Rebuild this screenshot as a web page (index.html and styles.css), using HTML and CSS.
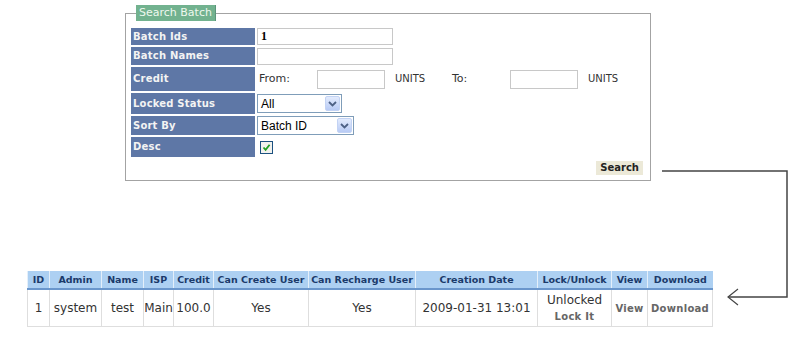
FILE: index.html
```html
<!DOCTYPE html>
<html lang="en">

<head>
  <meta charset="UTF-8">
  <title>Batch Search</title>
  <link rel="stylesheet" href="styles.css">
</head>

<body>
  <div class="page">

    <!-- Search form -->
    <fieldset class="search">
      <legend>Search Batch</legend>
      <table class="form">
        <tr class="row-ids">
          <th>Batch Ids</th>
          <td><input type="text" class="txt txt-id" value="1"></td>
        </tr>
        <tr class="row-names">
          <th>Batch Names</th>
          <td><input type="text" class="txt"></td>
        </tr>
        <tr class="row-credit">
          <th>Credit</th>
          <td>
            <div class="range">
              <span class="range-label">From:</span>
              <input type="text" class="txt txt-small">
              <span class="units">UNITS</span>
              <span class="range-label">To:</span>
              <input type="text" class="txt txt-small">
              <span class="units">UNITS</span>
            </div>
          </td>
        </tr>
        <tr class="row-status">
          <th>Locked Status</th>
          <td>
            <div class="select select-status">
              <span>All</span>
              <span class="select-btn">
                <svg width="9" height="6" viewBox="0 0 9 6"><path d="M1 1 L4.5 4.5 L8 1" fill="none" stroke="#4d6185" stroke-width="1.8"/></svg>
              </span>
            </div>
          </td>
        </tr>
        <tr class="row-sort">
          <th>Sort By</th>
          <td>
            <div class="select select-sort">
              <span>Batch ID</span>
              <span class="select-btn">
                <svg width="9" height="6" viewBox="0 0 9 6"><path d="M1 1 L4.5 4.5 L8 1" fill="none" stroke="#4d6185" stroke-width="1.8"/></svg>
              </span>
            </div>
          </td>
        </tr>
        <tr class="row-desc">
          <th>Desc</th>
          <td>
            <span class="check">
              <svg width="9" height="9" viewBox="0 0 9 9"><path d="M1.5 4.5 L3.6 6.8 L7.6 1.8" fill="none" stroke="#21a121" stroke-width="1.8"/></svg>
            </span>
          </td>
        </tr>
      </table>
      <div class="actions">
        <button class="btn">Search</button>
      </div>
    </fieldset>

    <!-- Results -->
    <table class="results">
      <colgroup>
        <col style="width: 22px">
        <col style="width: 52px">
        <col style="width: 42px">
        <col style="width: 30px">
        <col style="width: 40px">
        <col style="width: 95px">
        <col style="width: 107px">
        <col style="width: 122px">
        <col style="width: 74px">
        <col style="width: 36px">
        <col style="width: 65px">
      </colgroup>
      <thead>
        <tr>
          <th>ID</th>
          <th>Admin</th>
          <th>Name</th>
          <th>ISP</th>
          <th>Credit</th>
          <th>Can Create User</th>
          <th>Can Recharge User</th>
          <th>Creation Date</th>
          <th>Lock/Unlock</th>
          <th>View</th>
          <th>Download</th>
        </tr>
      </thead>
      <tbody>
        <tr>
          <td>1</td>
          <td>system</td>
          <td>test</td>
          <td>Main</td>
          <td>100.0</td>
          <td>Yes</td>
          <td>Yes</td>
          <td>2009-01-31 13:01</td>
          <td>Unlocked<br><a class="link">Lock It</a></td>
          <td><a class="link">View</a></td>
          <td><a class="link">Download</a></td>
        </tr>
      </tbody>
    </table>

    <!-- connector from the search button to the results -->
    <svg class="connector" width="800" height="340" viewBox="0 0 800 340">
      <path d="M662 171 H787 V297 H728" fill="none" stroke="#444" stroke-width="1.5"/>
      <path d="M738 289 L728 297 L738 305" fill="none" stroke="#444" stroke-width="1.2"/>
    </svg>
  </div>
</body>

</html>
```

FILE: styles.css
```css
body {
  margin: 0;
  background: #fff;
  font-family: 'DejaVu Sans', Verdana, sans-serif;
  color: #333;
}

.page {
  position: relative;
  width: 800px;
  height: 340px;
  overflow: hidden;
}

/* search box */

.search {
  box-sizing: border-box;
  width: 526px;
  margin: 5px 0 0 125px;
  padding: 5px 3px 5px 3px;
  border: 1px solid #a3a3a3;
}

.search legend {
  margin-left: 7px;
  padding: 0 3px;
  height: 16px;
  line-height: 16px;
  font-size: 11px;
  background: #72b28f;
  color: #eef8ee;
  border-right: 1px solid #5b957a;
}

.form {
  width: 100%;
  border-spacing: 2px;
  border-collapse: separate;
}

.form th {
  width: 124px;
  padding: 0 0 0 2px;
  box-sizing: border-box;
  text-align: left;
  font-size: 10px;
  line-height: 12px;
  font-weight: bold;
  letter-spacing: 0.2px;
  color: #f3f3f3;
  background: #5e77a6;
}

.form td {
  padding: 0;
  line-height: 12px;
  vertical-align: middle;
}

.row-ids th,
.row-ids td {
  height: 17px;
}

.row-names th,
.row-names td {
  height: 18px;
}

.row-credit th,
.row-credit td {
  height: 24px;
}

.row-status th,
.row-status td {
  height: 21px;
}

.row-sort th,
.row-sort td {
  height: 19px;
}

.row-desc th,
.row-desc td {
  height: 20px;
}

.txt {
  display: block;
  box-sizing: border-box;
  width: 136px;
  height: 17px;
  margin: 0;
  padding: 0 3px;
  border: 1px solid #c8c8c8;
  font-size: 11px;
}

.txt-id {
  font-family: 'Liberation Serif', serif;
  font-weight: bold;
  font-size: 12px;
  color: #000;
}

.txt-small {
  flex-shrink: 0;
  width: 68px;
  height: 19px;
}

.range {
  display: flex;
  align-items: center;
  font-size: 11px;
  color: #333;
}

.range-label {
  flex-shrink: 0;
  width: 60px;
  padding-left: 2px;
  box-sizing: border-box;
}

.units {
  flex-shrink: 0;
  width: 65px;
  padding-left: 10px;
  box-sizing: border-box;
  font-size: 10px;
}

.select {
  display: flex;
  align-items: center;
  box-sizing: border-box;
  height: 19px;
  padding-left: 3px;
  border: 1px solid #7f9db9;
  background: #fff;
  font-family: 'Liberation Sans', Arial, sans-serif;
  font-size: 12px;
  color: #000;
}

.select-status {
  width: 85px;
}

.select-sort {
  width: 97px;
}

.select-btn {
  display: flex;
  align-items: center;
  justify-content: center;
  width: 15px;
  height: 15px;
  margin-left: auto;
  margin-right: 1px;
  box-sizing: border-box;
  border: 1px solid #c3d3f4;
  border-radius: 2px;
  background: linear-gradient(#e3ebfd, #b8cbf5);
}

.check {
  display: flex;
  align-items: center;
  justify-content: center;
  width: 13px;
  height: 13px;
  margin-left: 3px;
  box-sizing: border-box;
  border: 1px solid #1c5180;
  background: #f2f2ee;
}

.actions {
  display: flex;
  justify-content: flex-end;
  padding-top: 2px;
}

.btn {
  height: 14px;
  margin: 0 4px 0 0;
  padding: 0 4px;
  border: none;
  background: #ece9d8;
  font-family: 'DejaVu Sans', Verdana, sans-serif;
  font-size: 10px;
  font-weight: bold;
  line-height: 14px;
  color: #222;
}

/* results table */

.results {
  table-layout: fixed;
  width: 685px;
  margin: 90px 0 0 27px;
  border-collapse: collapse;
}

.results th {
  height: 17px;
  padding: 0;
  font-size: 9.5px;
  font-weight: bold;
  color: #1b3a6a;
  background: #add0f2;
  border-left: 1px solid #e4effa;
  border-bottom: 2px solid #6a96cc;
  white-space: nowrap;
  overflow: hidden;
}

.results td {
  height: 36px;
  padding: 0;
  text-align: center;
  font-size: 12px;
  line-height: 16px;
  color: #333;
  border: 1px solid #dedede;
  white-space: nowrap;
  overflow: hidden;
}

.link {
  font-size: 10px;
  font-weight: bold;
  letter-spacing: 0.3px;
  color: #666;
}

.connector {
  position: absolute;
  top: 0;
  left: 0;
  pointer-events: none;
}
```
